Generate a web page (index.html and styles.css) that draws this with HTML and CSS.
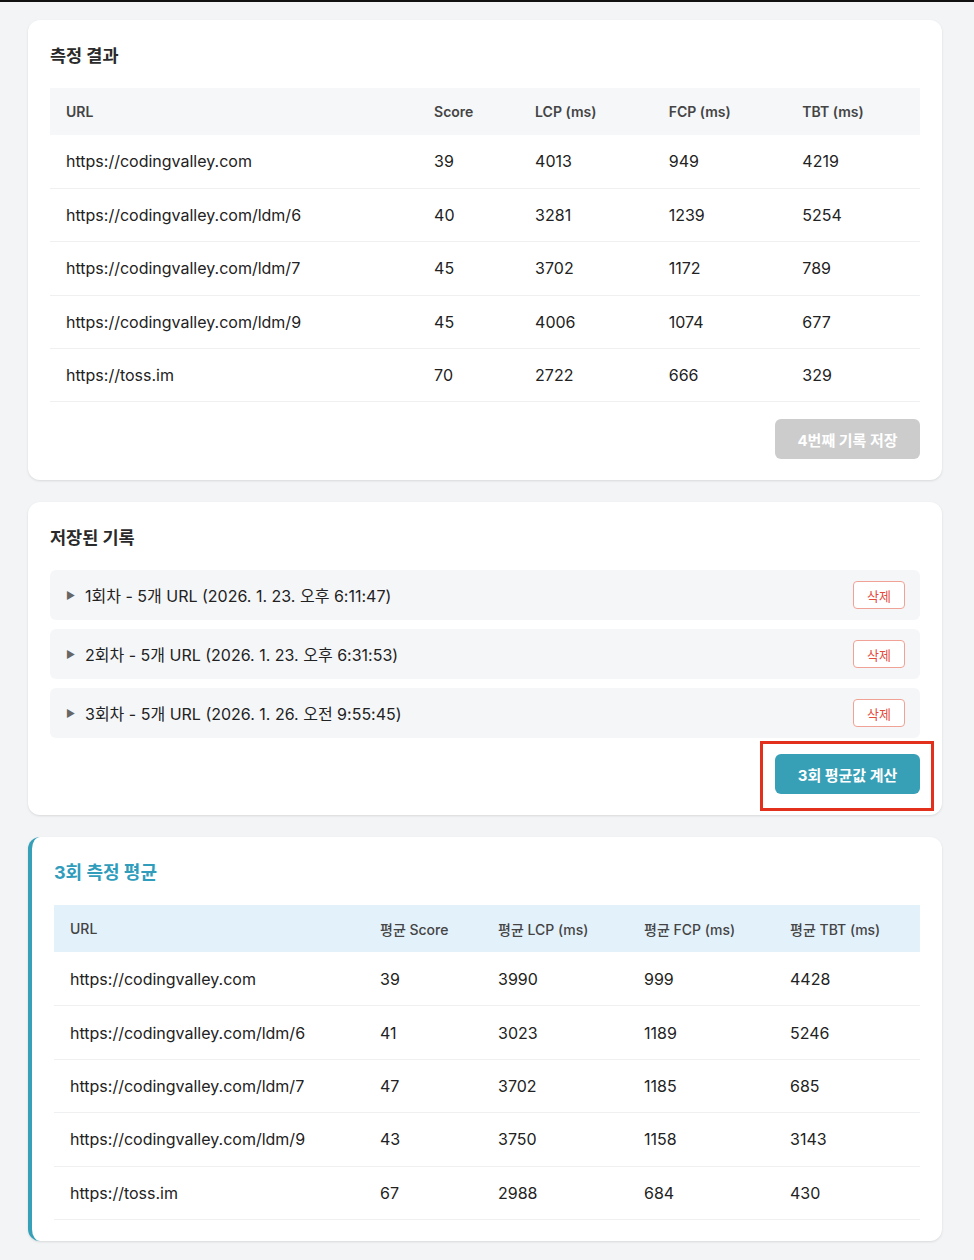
FILE: index.html
```html
<!DOCTYPE html>
<html lang="ko">
<head>
<meta charset="utf-8">
<link rel="stylesheet" href="styles.css">
</head>
<body>
<div class="topline"></div>
<main class="page">
  <section class="card">
    <h2 class="card-title">측정 결과</h2>
    <table class="tbl tbl-results">
      <colgroup>
        <col class="c-url"><col class="c-score"><col class="c-m"><col class="c-m"><col class="c-m">
      </colgroup>
      <thead>
        <tr><th>URL</th><th>Score</th><th>LCP (ms)</th><th>FCP (ms)</th><th>TBT (ms)</th></tr>
      </thead>
      <tbody>
        <tr><td>https://codingvalley.com</td><td>39</td><td>4013</td><td>949</td><td>4219</td></tr>
        <tr><td>https://codingvalley.com/ldm/6</td><td>40</td><td>3281</td><td>1239</td><td>5254</td></tr>
        <tr><td>https://codingvalley.com/ldm/7</td><td>45</td><td>3702</td><td>1172</td><td>789</td></tr>
        <tr><td>https://codingvalley.com/ldm/9</td><td>45</td><td>4006</td><td>1074</td><td>677</td></tr>
        <tr><td>https://toss.im</td><td>70</td><td>2722</td><td>666</td><td>329</td></tr>
      </tbody>
    </table>
    <div class="actions">
      <button class="btn btn-disabled" disabled>4번째 기록 저장</button>
    </div>
  </section>

  <section class="card">
    <h2 class="card-title">저장된 기록</h2>
    <div class="records">
      <div class="record">
        <span class="tri">&#9654;</span>
        <span class="record-label">1회차 - 5개 URL (2026. 1. 23. 오후 6:11:47)</span>
        <button class="btn-del">삭제</button>
      </div>
      <div class="record">
        <span class="tri">&#9654;</span>
        <span class="record-label">2회차 - 5개 URL (2026. 1. 23. 오후 6:31:53)</span>
        <button class="btn-del">삭제</button>
      </div>
      <div class="record">
        <span class="tri">&#9654;</span>
        <span class="record-label">3회차 - 5개 URL (2026. 1. 26. 오전 9:55:45)</span>
        <button class="btn-del">삭제</button>
      </div>
    </div>
    <div class="actions actions-tight">
      <div class="highlight-wrap">
        <button class="btn btn-primary">3회 평균값 계산</button>
        <div class="highlight"></div>
      </div>
    </div>
  </section>

  <section class="card card-accent">
    <h2 class="card-title title-accent">3회 측정 평균</h2>
    <table class="tbl tbl-avg">
      <colgroup>
        <col class="a-url"><col class="a-score"><col class="a-m"><col class="a-m"><col class="a-m">
      </colgroup>
      <thead>
        <tr><th>URL</th><th>평균 Score</th><th>평균 LCP (ms)</th><th>평균 FCP (ms)</th><th>평균 TBT (ms)</th></tr>
      </thead>
      <tbody>
        <tr><td>https://codingvalley.com</td><td>39</td><td>3990</td><td>999</td><td>4428</td></tr>
        <tr><td>https://codingvalley.com/ldm/6</td><td>41</td><td>3023</td><td>1189</td><td>5246</td></tr>
        <tr><td>https://codingvalley.com/ldm/7</td><td>47</td><td>3702</td><td>1185</td><td>685</td></tr>
        <tr><td>https://codingvalley.com/ldm/9</td><td>43</td><td>3750</td><td>1158</td><td>3143</td></tr>
        <tr><td>https://toss.im</td><td>67</td><td>2988</td><td>684</td><td>430</td></tr>
      </tbody>
    </table>
  </section>
</main>
</body>
</html>
```

FILE: styles.css
```css
* { box-sizing: border-box; }

html, body {
  margin: 0;
  padding: 0;
  background: #f3f4f6;
  font-family: Inter, "Noto Sans CJK KR", sans-serif;
  color: #222;
}

.topline {
  height: 2px;
  background: #111;
}

.page {
  width: 914px;
  margin-left: 28px;
  padding-top: 18px;
  padding-bottom: 20px;
  display: flex;
  flex-direction: column;
  gap: 22px;
}

.card {
  background: #fff;
  border-radius: 12px;
  box-shadow: 0 1px 3px rgba(0, 0, 0, 0.08), 0 1px 2px rgba(0, 0, 0, 0.04);
  padding: 23px 22px 21px 22px;
}

.card-accent {
  border-left: 4px solid #36a0b9;
  padding-bottom: 21px;
}

.card-title {
  margin: 0 0 19px 0;
  font-size: 17.5px;
  line-height: 26px;
  font-weight: 700;
  color: #2a2a2a;
}

.title-accent {
  color: #2f9dbb;
  font-size: 18px;
}

.tbl {
  width: 100%;
  border-collapse: collapse;
  table-layout: fixed;
}

.tbl th {
  text-align: left;
  font-size: 14px;
  font-weight: 600;
  color: #444;
  height: 47px;
  padding: 0 16px;
  background: #f5f7f9;
}

.tbl-avg th {
  background: #e3f1fb;
  font-weight: 500;
}

.tbl td {
  font-size: 16px;
  color: #222;
  height: 53.4px;
  padding: 0 16px;
  border-bottom: 1px solid #eef0f2;
  white-space: nowrap;
}

.c-url { width: 368px; }
.c-score { width: 101px; }
.c-m { width: 133.6px; }

.a-url { width: 310px; }
.a-score { width: 118px; }
.a-m { width: 146px; }

.actions {
  display: flex;
  justify-content: flex-end;
  margin-top: 17px;
}

.actions-tight {
  margin-top: 16px;
}

.btn {
  width: 145px;
  height: 40px;
  border: none;
  border-radius: 6px;
  font-family: Inter, "Noto Sans CJK KR", sans-serif;
  font-size: 15px;
  font-weight: 700;
  color: #fff;
}

.btn-disabled {
  background: #cccccc;
}

.btn-primary {
  background: #379fb6;
}

.records {
  display: flex;
  flex-direction: column;
  gap: 9px;
}

.record {
  display: flex;
  align-items: center;
  height: 50px;
  padding: 0 15px 0 16px;
  background: #f5f6f8;
  border-radius: 6px;
}

.tri {
  font-size: 10px;
  color: #666;
  width: 19px;
}

.record-label {
  flex: 1;
  font-size: 16px;
  color: #222;
}

.btn-del {
  width: 52px;
  height: 28px;
  background: #fff;
  border: 1px solid #f0a296;
  border-radius: 4px;
  color: #e54b3c;
  font-family: Inter, "Noto Sans CJK KR", sans-serif;
  font-size: 13px;
}

.highlight-wrap {
  position: relative;
}

.highlight {
  position: absolute;
  left: -15px;
  top: -13px;
  width: 174px;
  height: 70px;
  border: 3px solid #e3301c;
  pointer-events: none;
}
```
